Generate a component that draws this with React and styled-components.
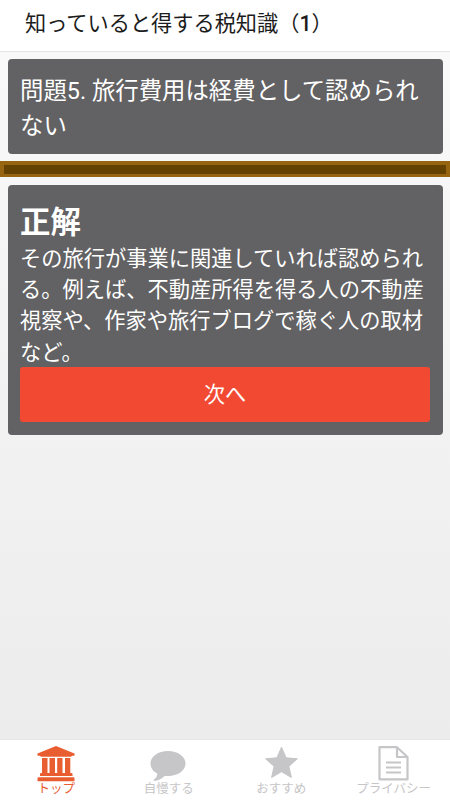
import React from 'react';
import styled, { createGlobalStyle } from 'styled-components';

const GlobalStyle = createGlobalStyle`
  * {
    box-sizing: border-box;
  }
  body {
    margin: 0;
    font-family: Roboto, 'Noto Sans CJK JP', sans-serif;
  }
`;

const Screen = styled.div`
  display: flex;
  flex-direction: column;
  height: 800px;
  overflow: hidden;
  background: linear-gradient(#f9f9f9 50px, #ececec 740px);
`;

const Header = styled.header`
  height: 52px;
  padding: 8px 0 0 25px;
  background: #fff;
  border-bottom: 1px solid #e4e4e4;
  color: #1c1c1c;
  font-size: 21.2px;
  line-height: 32px;
  white-space: nowrap;
`;

const HeaderNumber = styled.span`
  font-weight: 500;
`;

const Content = styled.main`
  flex: 1;
  padding-top: 7px;
`;

const Card = styled.section`
  height: ${(props) => props.$height}px;
  margin: 0 7.5px;
  padding: ${(props) => props.$top}px 12.5px 0;
  background: #626163;
  border-radius: 4px;
  color: #fff;
  white-space: nowrap;
`;

const Question = styled.p`
  margin: 0;
  font-size: 23.4px;
  line-height: 34.5px;
`;

const Divider = styled.div`
  height: 16px;
  margin: 7.5px 0;
  background: #664200;
  border: 4px solid #976510;
  border-bottom-width: 3px;
`;

const Result = styled.h2`
  margin: 0;
  font-size: 30.4px;
  font-weight: 700;
  line-height: 40px;
`;

const Explanation = styled.p`
  margin: 0;
  font-size: 21.25px;
  line-height: 31.4px;
`;

const NextButton = styled.button`
  display: block;
  width: 100%;
  height: 55px;
  margin-top: -1px;
  padding: 0 0 4px;
  background: #f24a32;
  border: 0;
  border-radius: 3px;
  color: #fff;
  font-family: inherit;
  font-size: 21.2px;
`;

const TabBar = styled.nav`
  display: grid;
  grid-template-columns: repeat(4, 1fr);
  height: 61px;
  padding: 0;
  background: #fff;
  border-top: 1px solid #e6e6e6;
`;

const Tab = styled.a`
  display: flex;
  flex-direction: column;
  align-items: center;
  padding-top: 4px;
  color: ${(props) => (props.$active ? '#e95e31' : '#c6c5c7')};
  font-size: 12.5px;
  line-height: 18px;
  white-space: nowrap;
`;

const TabIcon = styled.svg`
  display: block;
  flex: none;
  width: 40px;
  height: 38px;
  margin: 0 1px -2.5px 0;
`;

const questionLines = ['問題5. 旅行費用は経費として認められ', 'ない'];

const answerLines = [
  'その旅行が事業に関連していれば認められ',
  'る。例えば、不動産所得を得る人の不動産',
  '視察や、作家や旅行ブログで稼ぐ人の取材',
  'など。',
];

const tabs = [
  {
    label: 'トップ',
    active: true,
    icon: (
      <g fill="#e95e31">
        <path d="M20 2 38.500 9.500v2.200H36l-1 1H5l-1-1H1.500V9.500Z" />
        <path d="M6 14h5.500v15.500H6zM13.500 14H19v15.500h-5.500zM21.200 14h5.300v15.500h-5.300zM29 14h5.300v15.500H29z" />
        <path d="M5 29h30.500q1 0 1 1v2H4v-2q0-1 1-1ZM2.500 33.200h35q1 0 1 1V37.200h-37v-3q0-1 1-1Z" />
      </g>
    ),
  },
  {
    label: '自慢する',
    icon: (
      <path
        fill="#c6c5c7"
        d="M20 7c9.800 0 17.500 5.500 17.500 12.500S29.800 32 20 32q-1.700 0-3.200-.2Q12 36.800 6 37q-1-.4.200-1.400 2.800-2.200 3.300-5.800C5.200 27.500 2.500 23.800 2.500 19.500 2.500 12.500 10.200 7 20 7Z"
      />
    ),
  },
  {
    label: 'おすすめ',
    icon: (
      <path
        fill="#c6c5c7"
        stroke="#c6c5c7"
        strokeLinejoin="round"
        d="m20.500 3.200 4.600 10.600 11.200 1-8.400 7.600 2.500 11.100L20.500 27.700l-9.900 5.800 2.500-11.100-8.400-7.600 11.200-1Z"
      />
    ),
  },
  {
    label: 'プライバシー',
    icon: (
      <g fill="none" stroke="#c6c5c7" strokeWidth="2.200" strokeLinejoin="round">
        <path d="M6.500 3.200H24L34.500 13v22.300h-28ZM24 3.200V13h10.500" />
        <path d="M13 18.500h15M13 23.500h15M13 28.500h15" />
      </g>
    ),
  },
];

const Lines = ({ lines }) =>
  lines.map((line, index) => (
    <React.Fragment key={index}>
      {index > 0 && <br />}
      {line}
    </React.Fragment>
  ));

const App = () => {
  return (
    <Screen lang="ja">
      <GlobalStyle />
      <Header>
        知っていると得する税知識（<HeaderNumber>1</HeaderNumber>）
      </Header>
      <Content>
        <Card $height={94.5} $top={15}>
          <Question>
            <Lines lines={questionLines} />
          </Question>
        </Card>
        <Divider />
        <Card $height={250} $top={18}>
          <Result>正解</Result>
          <Explanation>
            <Lines lines={answerLines} />
          </Explanation>
          <NextButton type="button">次へ</NextButton>
        </Card>
      </Content>
      <TabBar>
        {tabs.map((tab) => (
          <Tab key={tab.label} $active={tab.active}>
            <TabIcon viewBox="0 0 40 38">{tab.icon}</TabIcon>
            {tab.label}
          </Tab>
        ))}
      </TabBar>
    </Screen>
  );
};

export default App;
